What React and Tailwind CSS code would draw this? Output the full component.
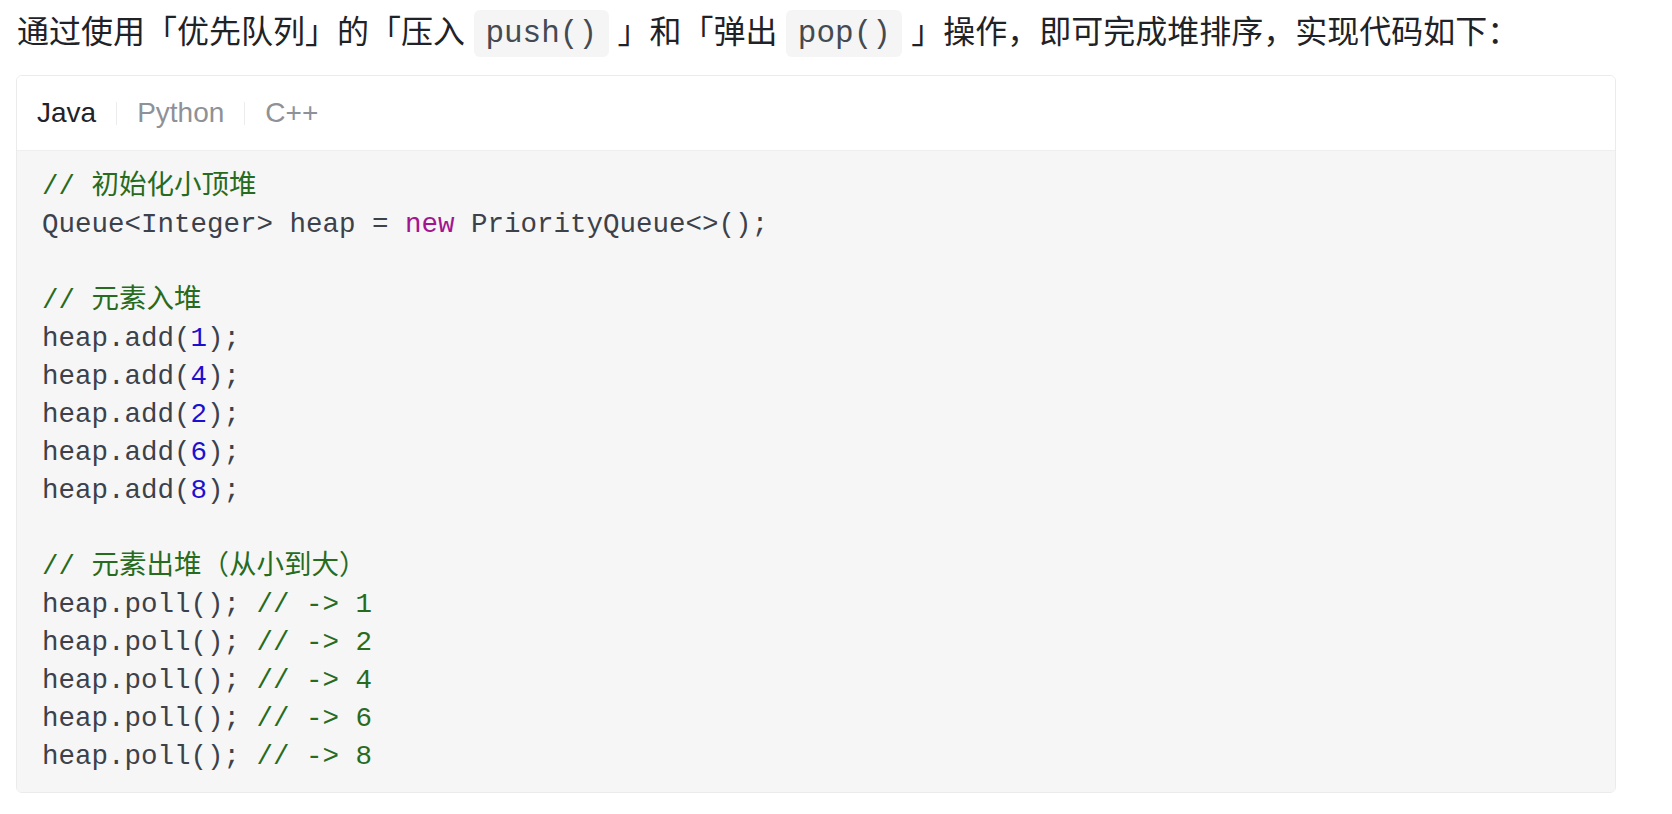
import React from "react";

const mono = "font-['Liberation_Mono','Noto_Sans_CJK_SC',monospace]";

// code tokens: c = comment, k = keyword, n = number, plain text otherwise
const lines = [
  [["c", "// 初始化小顶堆"]],
  [["", "Queue<Integer> heap = "], ["k", "new"], ["", " PriorityQueue<>();"]],
  [],
  [["c", "// 元素入堆"]],
  [["", "heap.add("], ["n", "1"], ["", ");"]],
  [["", "heap.add("], ["n", "4"], ["", ");"]],
  [["", "heap.add("], ["n", "2"], ["", ");"]],
  [["", "heap.add("], ["n", "6"], ["", ");"]],
  [["", "heap.add("], ["n", "8"], ["", ");"]],
  [],
  [["c", "// 元素出堆（从小到大）"]],
  [["", "heap.poll(); "], ["c", "// -> 1"]],
  [["", "heap.poll(); "], ["c", "// -> 2"]],
  [["", "heap.poll(); "], ["c", "// -> 4"]],
  [["", "heap.poll(); "], ["c", "// -> 6"]],
  [["", "heap.poll(); "], ["c", "// -> 8"]],
];

const tokenClass = {
  c: "text-[#276b1e]",
  k: "text-[#a3158f]",
  n: "text-[#1c10d0]",
  "": "",
};

const InlineCode = ({ children }) => (
  <code
    className={`${mono} inline-block h-[47px] align-middle rounded-[6px] bg-[#f5f5f5] px-[11.5px] text-[31px] leading-[47px] text-[#454a52] -translate-y-[1px]`}
  >
    {children}
  </code>
);

const Tab = ({ label, active }) => (
  <div
    className={`px-5 text-[28px] leading-[36px] ${active ? "text-[#1f2328]" : "text-[#8e9197]"}`}
  >
    {label}
  </div>
);

const App = () => {
  return (
    <div className="min-h-[814px] bg-white font-['Liberation_Sans','Noto_Sans_CJK_SC',sans-serif]">
      <p className="pl-[17px] pt-[8px] text-[32px] leading-[48px] text-[#1f2328]">
        通过使用「优先队列」的「压入 <InlineCode>push()</InlineCode> 」和「弹出 <InlineCode>pop()</InlineCode> 」操作，即可完成堆排序，实现代码如下：
      </p>

      <div className="ml-[16px] mt-[17px] w-[1600px] overflow-hidden rounded-[6px] border border-[#ebebeb]">
        <div className="flex h-[75px] items-center border-b border-[#efefef] bg-white">
          <Tab label="Java" active />
          <div className="h-[23px] w-px bg-[#ececec]" />
          <Tab label="Python" />
          <div className="h-[23px] w-px bg-[#ececec]" />
          <Tab label="C++" />
        </div>
        <pre className={`${mono} bg-[#f6f6f6] pl-[25px] pt-[17px] pb-[16px] text-[27.5px] leading-[38px] text-[#3c414a]`}>
          {lines.map((line, i) => (
            <div key={i} className="h-[38px]">
              {line.map(([t, s], j) => (
                <span key={j} className={tokenClass[t]}>
                  {s}
                </span>
              ))}
            </div>
          ))}
        </pre>
      </div>
    </div>
  );
};

export default App;
